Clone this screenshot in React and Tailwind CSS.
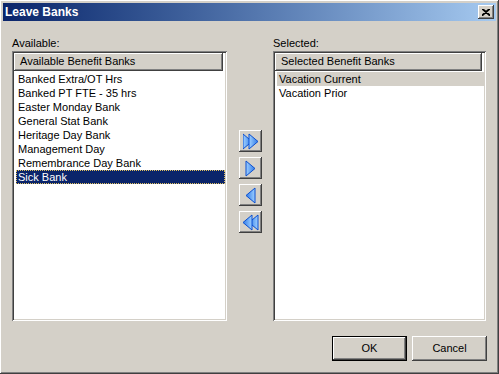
import React from "react";

const available = [
  "Banked Extra/OT Hrs",
  "Banked PT FTE - 35 hrs",
  "Easter Monday Bank",
  "General Stat Bank",
  "Heritage Day Bank",
  "Management Day",
  "Remembrance Day Bank",
  "Sick Bank",
];
const selected = ["Vacation Current", "Vacation Prior"];

const raised =
  "shadow-[inset_-1px_-1px_#404040,inset_1px_1px_#ffffff,inset_-2px_-2px_#808080,inset_2px_2px_#d4d0c8]";
const sunken =
  "shadow-[inset_1px_1px_#808080,inset_-1px_-1px_#ffffff,inset_2px_2px_#404040,inset_-2px_-2px_#d4d0c8]";

function Arrow({ dir, double }) {
  const tri = (x) =>
    dir === "right"
      ? `M${x} 1 L${x + 9} 8.5 L${x} 16 Z`
      : `M${x + 9} 1 L${x} 8.5 L${x + 9} 16 Z`;
  const xs = double ? (dir === "right" ? [0, 6] : [6, 0]) : [1];
  return (
    <svg width={double ? 16 : 11} height="17" viewBox={`0 0 ${double ? 16 : 11} 17`}>
      <defs>
        <linearGradient id={`g-${dir}`} x1="0" y1="0" x2="1" y2="0">
          <stop offset="0" stopColor={dir === "right" ? "#9fd0ff" : "#2f7ae8"} />
          <stop offset="1" stopColor={dir === "right" ? "#2f7ae8" : "#9fd0ff"} />
        </linearGradient>
      </defs>
      {xs.map((x) => (
        <path key={x} d={tri(x)} fill={`url(#g-${dir})`} stroke="#0b4fd0" strokeWidth="1" strokeLinejoin="round" />
      ))}
    </svg>
  );
}

function ListBox({ title, items, sel, focused }) {
  return (
    <div className={`h-[270px] bg-white p-[2px] ${sunken}`}>
      <div className={`h-[18px] w-[calc(100%-2px)] bg-[#d4d0c8] pl-[6px] leading-[17px] ${raised}`}>
        {title}
      </div>
      <div className="pt-[1px]">
        {items.map((it) => (
          <div
            key={it}
            className={`ml-[2px] mr-[0px] h-[14px] pl-[2px] leading-[14px] ${
              it === sel
                ? focused
                  ? "bg-[#0a246a] text-white outline-1 outline-dotted outline-offset-[-1px] outline-[#e0c060]"
                  : "bg-[#d4d0c8]"
                : ""
            }`}
          >
            {it}
          </div>
        ))}
      </div>
    </div>
  );
}

export default function App() {
  return (
    <div
      className={`flex h-[374px] w-[499px] flex-col bg-[#d4d0c8] p-[3px] text-[11px] text-black ${raised}`}
      style={{ fontFamily: '"Liberation Sans", Arial, sans-serif' }}
    >
      <div className="flex h-[18px] items-center justify-between bg-gradient-to-r from-[#0a246a] to-[#a6caf0] pl-[2px] pr-[2px]">
        <span className="text-[12px] font-bold text-white">Leave Banks</span>
        <div className={`flex h-[14px] w-[16px] items-center justify-center bg-[#d4d0c8] ${raised}`}>
          <svg width="8" height="7" viewBox="0 0 8 7">
            <path d="M0 0 L8 7 M8 0 L0 7 M1 0 L8 6 M7 0 L0 6" stroke="#000" strokeWidth="1.3" />
          </svg>
        </div>
      </div>
      <div className="flex flex-1 flex-col px-[9px] pt-[15px]">
        <div className="flex">
          <div className="w-[215px]">
            <div className="h-[15px] leading-[15px]">Available:</div>
            <ListBox title="Available Benefit Banks" items={available} sel="Sick Bank" focused />
          </div>
          <div className="ml-[12px] flex w-[23px] flex-col gap-[5px] pt-[94px]">
            {[
              ["right", true],
              ["right", false],
              ["left", false],
              ["left", true],
            ].map(([d, dbl], i) => (
              <div key={i} className={`flex h-[22px] w-[23px] items-center justify-center ${raised}`}>
                <Arrow dir={d} double={dbl} />
              </div>
            ))}
          </div>
          <div className="ml-[11px] w-[213px]">
            <div className="h-[15px] leading-[15px]">Selected:</div>
            <ListBox title="Selected Benefit Banks" items={selected} sel="Vacation Current" />
          </div>
        </div>
        <div className="mt-[15px] flex justify-end gap-[5px] pr-[-1px]">
          <button className="h-[25px] w-[75px] bg-[#d4d0c8] shadow-[inset_1px_1px_#000,inset_-1px_-1px_#000,inset_-2px_-2px_#404040,inset_2px_2px_#ffffff,inset_-3px_-3px_#808080]">
            OK
          </button>
          <button className={`h-[25px] w-[75px] bg-[#d4d0c8] ${raised}`}>Cancel</button>
        </div>
      </div>
    </div>
  );
}
